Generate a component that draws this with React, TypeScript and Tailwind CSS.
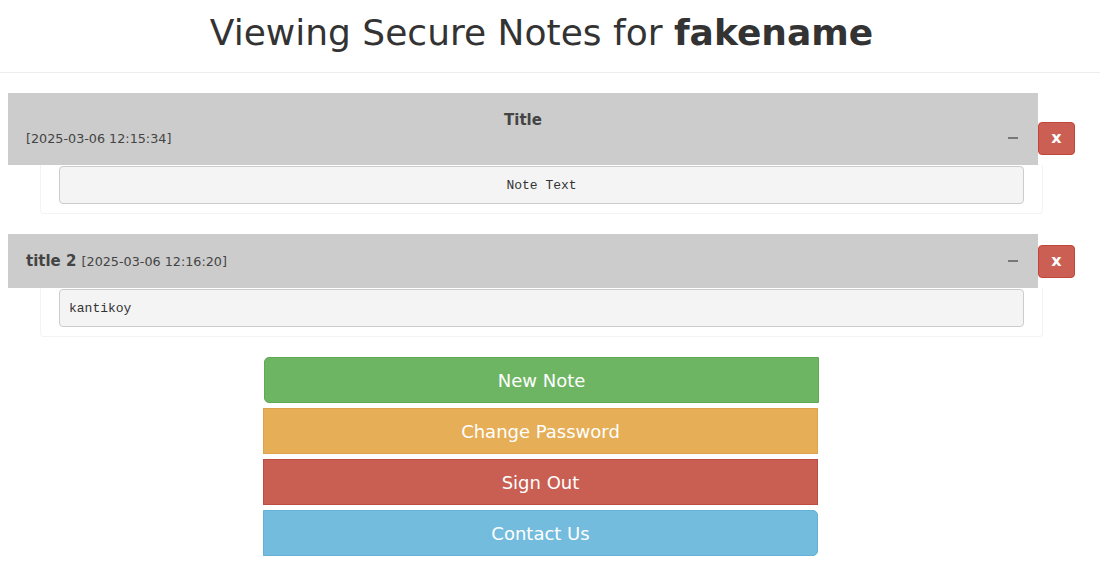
type Note = {
  title: string;
  date: string;
  text: string;
  stacked: boolean;
};

const notes: Note[] = [
  { title: 'Title', date: '[2025-03-06 12:15:34]', text: 'Note Text', stacked: true },
  { title: 'title 2', date: '[2025-03-06 12:16:20]', text: 'kantikoy', stacked: false },
];

function NoteCard({ note }: { note: Note }) {
  return (
    <div className="mb-5">
      <div className="flex items-center">
        <div
          className={
            'relative ml-2 w-[1030px] bg-[#cccccc] text-[#444] px-[18px] ' +
            (note.stacked ? 'h-[72px] pt-[17px]' : 'h-[54px] flex items-center')
          }
        >
          {note.stacked ? (
            <>
              <div className="text-center font-bold text-[15px] leading-5">{note.title}</div>
              <div className="text-[12.75px] leading-5 mt-[-1px]">{note.date}</div>
            </>
          ) : (
            <div className="leading-5">
              <span className="font-bold text-[15px]">{note.title}</span>{' '}
              <span className="text-[12.75px]">{note.date}</span>
            </div>
          )}
          <div
            className={
              'absolute right-[20px] w-[10px] h-[2px] bg-[#777] ' +
              (note.stacked ? 'top-[44px]' : 'top-[26px]')
            }
          />
        </div>
        <button
          className={
            'w-[37px] h-[33px] rounded-[4px] bg-[#cb5f53] border border-[#c0463b] text-white font-bold text-[16px] ' +
            (note.stacked ? 'mt-[18px]' : '')
          }
        >
          x
        </button>
      </div>
      <div className="ml-[40px] w-[1003px] border border-[#f3f3f3] border-t-0 rounded-b-[4px] pt-px pb-[9px] px-[18px]">
        <div
          className={
            'h-[38px] pt-px bg-[#f4f4f4] border border-[#cccccc] rounded-[4px] flex items-center px-[9px] text-[13px] text-[#333] ' +
            (note.stacked ? 'justify-center' : '')
          }
          style={{ fontFamily: '"Liberation Mono", monospace' }}
        >
          {note.text}
        </div>
      </div>
    </div>
  );
}

export default function App() {
  return (
    <div className="min-h-screen bg-white text-[#333]" style={{ fontFamily: '"DejaVu Sans", sans-serif' }}>
      <div className="h-[73px] border-b border-[#eeeeee] flex items-center justify-center pr-[17px]">
        <h1 className="text-[36px] leading-none mt-[-7px]">
          Viewing Secure Notes for <b>fakename</b>
        </h1>
      </div>
      <div className="pt-5">
        {notes.map((n) => (
          <NoteCard key={n.title} note={n} />
        ))}
      </div>
      <div className="flex flex-col items-start ml-[263px] w-[556px] gap-[5px] text-white text-[18px]">
        <button className="ml-px w-[555px] h-[46px] bg-[#6db562] border border-[#5faa55] rounded-l-[5px]">
          New Note
        </button>
        <button className="w-[555px] h-[46px] bg-[#e5ae57] border border-[#dfa24a]">
          Change Password
        </button>
        <button className="w-[555px] h-[46px] bg-[#c95e52] border border-[#bd4d42]">
          Sign Out
        </button>
        <button className="w-[555px] h-[46px] bg-[#74bcdd] border border-[#64b0d6] rounded-r-[5px]">
          Contact Us
        </button>
      </div>
    </div>
  );
}
